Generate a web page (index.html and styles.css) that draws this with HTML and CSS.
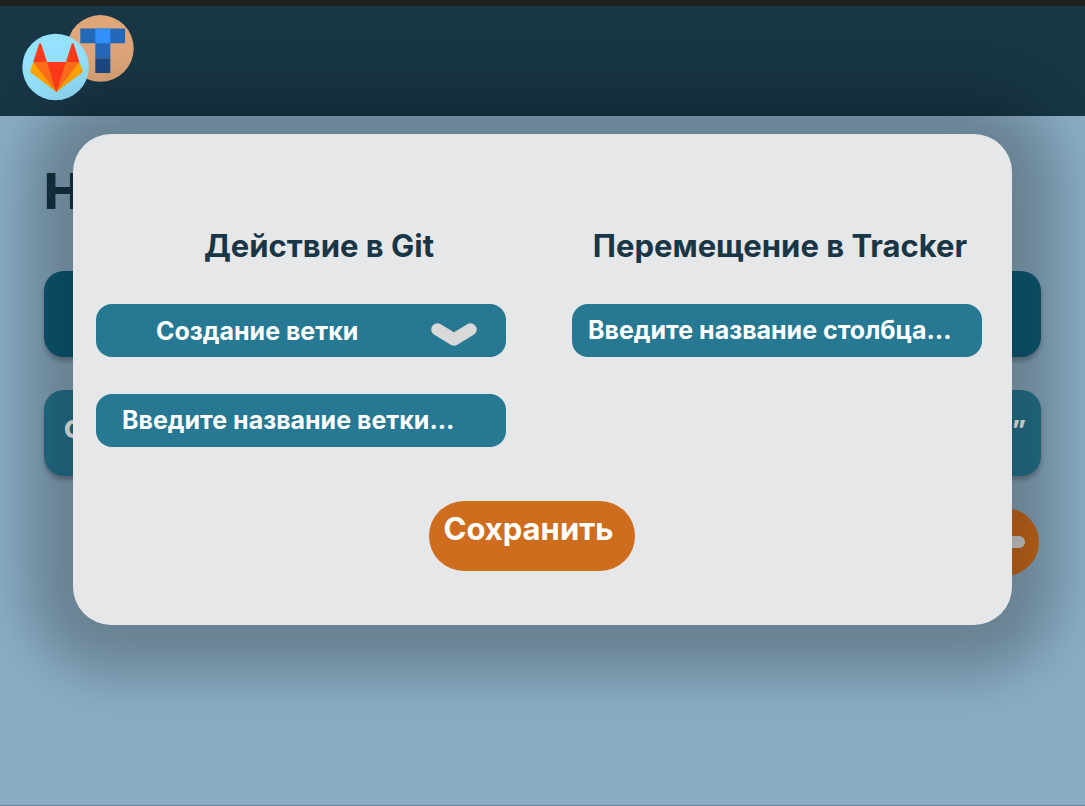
FILE: index.html
```
<!DOCTYPE html>
<html lang="ru">
<head>
<meta charset="utf-8">
<meta name="viewport" content="width=device-width, initial-scale=1">
<title>Git и Tracker</title>
<link rel="stylesheet" href="styles.css">
</head>
<body>
<div class="page">
  <header class="header">
    <svg class="logo" width="112" height="88" viewBox="22 14 112 88" aria-hidden="true">
      <circle cx="100.4" cy="48.4" r="33.3" fill="#dfa679"/>
      <path fill="#2468b8" d="M80.3 28.5h44.8v14.8H80.3zM95.3 43.3h15v15h-15z"/>
      <path fill="#338ffa" d="M95.3 28.5h15v14.8h-15z"/>
      <path fill="#1b4a85" d="M95.3 58.3h15V73h-15z"/>
      <circle cx="55.6" cy="67" r="33.3" fill="#94e2ff"/>
      <path fill="#ffa500" d="M33.2 62 30 72l26.3 20L83 72l-3.6-10z"/>
      <path fill="#ff6e1a" d="M33.2 62h46.2L56.3 92z"/>
      <path fill="#ff3a1a" d="M39.2 43.4h1.8L47 62H33.2zM71.8 43.4h1.8L79.4 62H66zM47 62h19l-9.7 30z"/>
    </svg>
  </header>
  <main class="content">
    <h1 class="title">Н</h1>
    <div class="row row-dark"></div>
    <div class="row"><span>С</span><span>”</span></div>
    <button class="remove" type="button" aria-label="Удалить">
      <svg width="40" height="12" viewBox="0 0 40 12" aria-hidden="true"><rect width="40" height="12" rx="6" fill="#d9d9d9"/></svg>
    </button>
  </main>
  <dialog class="modal" open>
    <form class="form">
      <div class="columns">
        <div class="column">
          <h2 class="heading heading-git" id="git-title">Действие в Git</h2>
          <div class="picker">
            <select class="field field-select" aria-labelledby="git-title"><option>Создание ветки</option></select>
            <svg class="chevron" width="46" height="23" viewBox="0 0 46 23" aria-hidden="true"><path d="M6.5 6.5 23 16.5 39.5 6.5" fill="none" stroke="#d9d9d9" stroke-width="12.5" stroke-linecap="round" stroke-linejoin="round"/></svg>
          </div>
          <input class="field field-branch" type="text" placeholder="Введите название ветки..." aria-label="Название ветки">
        </div>
        <div class="column">
          <h2 class="heading heading-tracker" id="tracker-title">Перемещение в Tracker</h2>
          <input class="field field-column" type="text" placeholder="Введите название столбца..." aria-labelledby="tracker-title">
        </div>
      </div>
      <button class="save" type="button">Сохранить</button>
    </form>
  </dialog>
</div>
</body>
</html>
```
FILE: styles.css
```
* {
  box-sizing: border-box;
}

body {
  margin: 0;
  font-family: Inter, "Open Sans", sans-serif;
  font-weight: 740;
}

.page {
  position: relative;
  min-height: 100vh;
  overflow: hidden;
  background: #8badc4;
  border-top: 6px solid #1f1f1f;
  border-bottom: 1px solid #6b8596;
}

.header {
  height: 110px;
  padding: 8px 22px;
  background: #183646;
}

.logo {
  display: block;
}

.content {
  display: flex;
  flex-direction: column;
  padding: 45px 44px 0;
}

.title {
  margin: 0 0 50px;
  font-size: 50px;
  font-weight: 800;
  line-height: 60px;
  color: #183646;
}

.row {
  display: flex;
  justify-content: space-between;
  height: 86px;
  margin-bottom: 33px;
  padding: 24px 15px 0 20px;
  border-radius: 20px;
  background: #267893;
  box-shadow: 0 4px 4px rgba(0, 0, 0, 0.25);
  font-size: 25px;
  font-weight: 800;
  line-height: 30px;
  color: #fff;
}

.row-dark {
  background: #0d5d7a;
}

.remove {
  display: flex;
  align-items: center;
  justify-content: center;
  align-self: flex-end;
  width: 68px;
  height: 68px;
  margin: -1px 2px 0 0;
  padding: 0;
  border: 0;
  border-radius: 50%;
  background: #ce6d1d;
}

.modal {
  position: absolute;
  top: 128px;
  left: 73px;
  right: 73px;
  width: auto;
  margin: 0;
  padding: 92px 30px 54px 23px;
  border: 0;
  border-radius: 38px;
  background: #e6e7e9;
  box-shadow: 0 4px 54px 45px rgba(0, 0, 0, 0.25);
}

.form {
  display: flex;
  flex-direction: column;
}

.columns {
  display: grid;
  grid-template-columns: 1fr 1fr;
  gap: 66px;
}

.column {
  display: flex;
  flex-direction: column;
}

.heading {
  margin: 0 0 38px;
  font-size: 31px;
  font-weight: inherit;
  line-height: 40px;
  text-align: center;
  white-space: nowrap;
  color: #183646;
}

.heading-git {
  padding-left: 36px;
}

.heading-tracker {
  padding-left: 6px;
}

.field {
  display: block;
  width: 100%;
  height: 53px;
  border: 0;
  border-radius: 16px;
  background: #267893;
  color: #fff;
  font: inherit;
  font-size: 25px;
}

.field::placeholder {
  color: #fff;
  opacity: 1;
}

.field-select {
  appearance: none;
  padding: 0 80px 0 60px;
}

.field-branch {
  padding: 0 16px 2px 26px;
}

.field-column {
  padding: 0 16px 2px;
}

.picker {
  position: relative;
  margin-bottom: 37px;
}

.chevron {
  position: absolute;
  top: 19px;
  right: 29px;
  pointer-events: none;
}

.save {
  align-self: center;
  height: 70px;
  margin: 54px 14px 0 0;
  padding: 0 21px 16px 14px;
  border: 0;
  border-radius: 35px;
  background: #ce6d1d;
  color: #fff;
  font: inherit;
  font-size: 31px;
}
```
